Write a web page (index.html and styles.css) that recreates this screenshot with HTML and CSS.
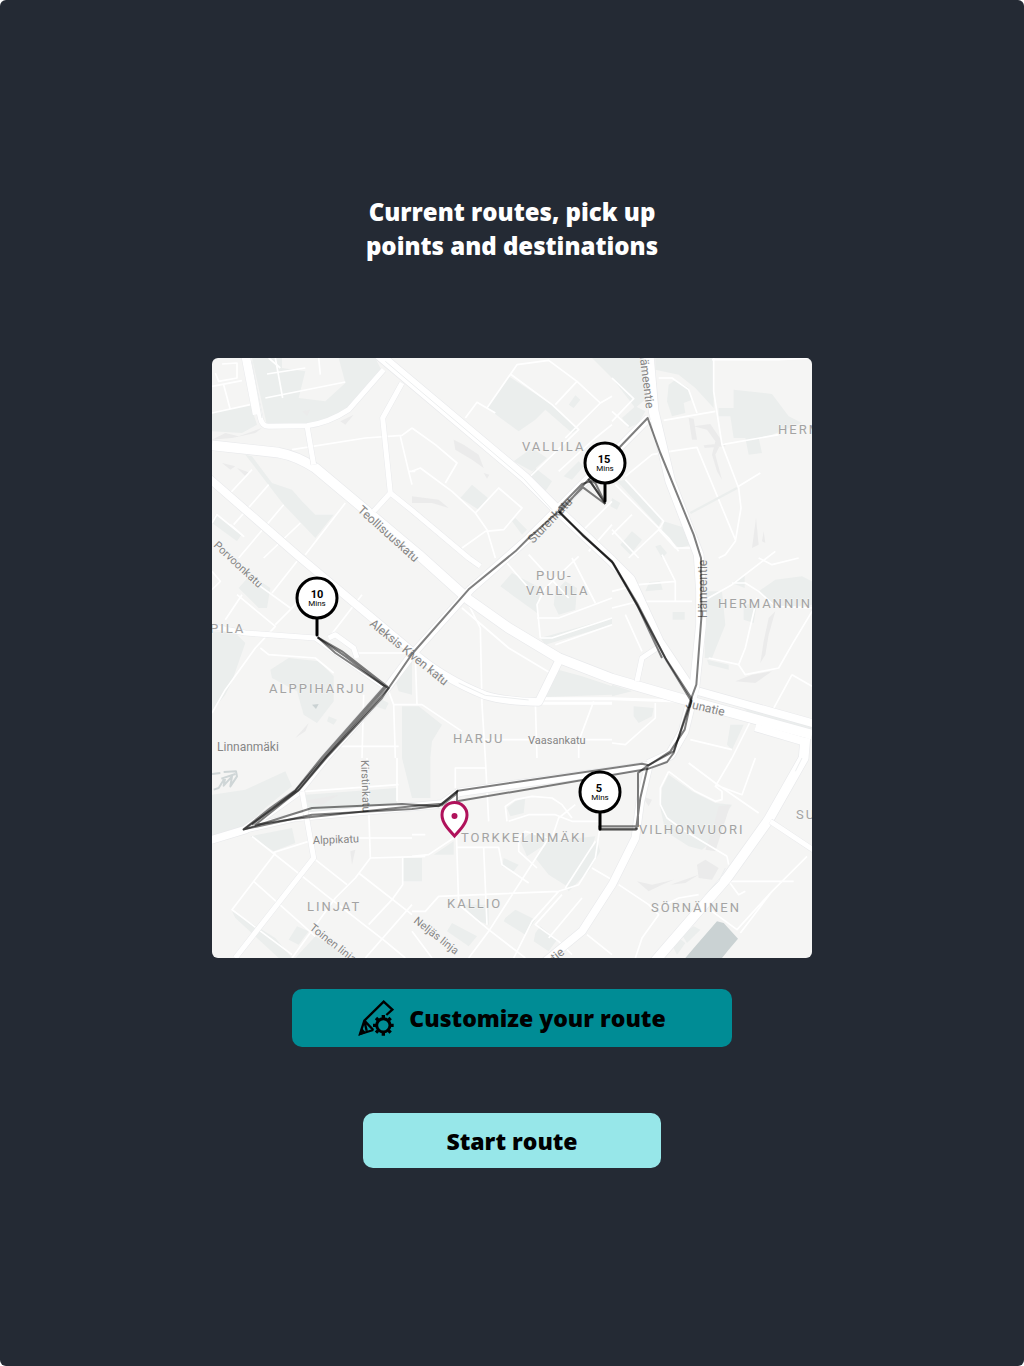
FILE: index.html
```html
<!DOCTYPE html>
<html lang="en">
<head>
<meta charset="utf-8">
<meta name="viewport" content="width=device-width, initial-scale=1">
<title>Current routes</title>
<link rel="stylesheet" href="styles.css">
</head>
<body>
<main class="screen">
  <h1 class="title">Current routes, pick up points and destinations</h1>

  <svg class="map" viewBox="0 0 600 600" role="img" aria-label="Map of current routes">
    <!-- Base map, drawn on a grid three times finer than the labels -->
    <svg width="600" height="600" viewBox="0 0 1800 1800">
      <rect class="land" width="1800" height="1800"/>
      <g class="park">
        <path d="M0 165L115 140L135 200L90 225L0 220ZM120 0L210 0V30L280 40L260 120L340 130L400 75L380 0H490L510 40L410 150Q350 200 285 203H165Z"/>
        <path d="M100 290L120 295L180 375L240 395L270 430L310 470L365 470L310 540L215 440Z"/>
        <path d="M10 470L88 530L75 550L0 495Z"/>
        <path d="M890 55L1020 140L1095 215L1080 225L1000 155L970 185L920 220L825 150ZM905 310L960 270L1005 300L960 340ZM780 380L828 420L800 455L745 420ZM950 360L970 330L1020 370L1000 400ZM1055 355L1100 310L1115 325L1080 365ZM1140 0H1310L1305 120L1270 150L1200 60ZM900 490L910 480L945 515L930 530ZM1070 140L1090 112L1105 125L1085 150Z"/>
        <path d="M1330 0H1505V150L1450 90L1400 50L1330 35ZM1370 80L1390 65L1430 90L1440 125L1415 135L1420 165L1380 175L1365 130ZM1230 180L1270 145L1300 160L1280 195L1250 210ZM1565 95L1680 108L1730 175L1770 195L1680 230L1640 240L1650 285L1610 290L1600 240L1565 240L1555 175L1520 175V150L1565 150Z"/>
        <path d="M1215 370L1240 365L1350 485L1340 505ZM1355 490L1420 510L1440 560L1400 570L1350 520ZM1225 560L1260 520L1290 545L1255 590ZM1330 565L1345 560L1365 585L1350 600ZM1200 420L1225 435L1215 455L1195 445Z"/>
        <path d="M80 690L115 650L175 690L165 750L140 750ZM0 820L70 825L100 855L60 970L40 1010L0 1060Z"/>
        <path d="M230 900L320 910L365 955V1030L315 1095L275 1070L255 1000L180 960L175 935ZM350 1075L375 1085L365 1100L345 1090Z"/>
        <path d="M560 930L600 890V1010L560 1000L545 950ZM500 1020L530 1035L520 1055L490 1045ZM570 1045H620L690 1100L660 1150L655 1200H570ZM570 1200H655V1320H600Z"/>
        <path d="M865 685L900 645L985 690L975 765ZM1030 700L1060 670L1095 690L1090 755L1040 770L1025 740ZM985 840L1200 780V800L1000 860ZM1020 930L1110 955L1200 985V1010L985 1018Z"/>
        <path d="M1300 700L1312 672L1345 670L1352 695ZM1480 700L1530 700L1540 800L1500 900H1478ZM1382 762H1418V785H1382ZM1560 675L1598 650V690ZM1640 700L1690 665L1770 655L1800 670V740L1690 750L1660 720ZM1595 740L1635 735L1625 795L1595 785Z"/>
        <path d="M1265 1045L1325 1050L1320 1075L1280 1095L1265 1075ZM1555 1100L1595 1100L1560 1175L1545 1160ZM1580 1040L1800 1105V1125L1640 1085ZM1485 905L1550 920V935L1490 920ZM1200 980L1260 1000L1200 1015Z"/>
        <path d="M0 1310L100 1295L220 1240L240 1285L160 1350L95 1410L0 1435ZM280 1310L555 1290V1335L290 1365ZM115 1435L240 1410L250 1455L185 1480ZM60 1660L190 1740L240 1800H200L70 1680ZM255 1705L290 1720L260 1760L230 1745ZM310 1735L420 1800H250ZM570 1500H630V1570H570Z"/>
        <path d="M665 1490L725 1450V1490ZM910 1330L940 1320L935 1365L895 1375L885 1350ZM925 1450L955 1425L1030 1440L945 1495ZM970 1500L1010 1450L1150 1435L1130 1500L1065 1585L1010 1550ZM1155 1450L1165 1480L1130 1540L1070 1600L1060 1585ZM875 1500L920 1520L905 1540L870 1525ZM750 1640H830V1700L800 1690ZM880 1680L910 1655L970 1685L940 1730L875 1690ZM720 1695L795 1735L770 1765L705 1720ZM970 1725L985 1705L1035 1745L1010 1780L965 1750Z"/>
        <path d="M1350 1290L1370 1250L1440 1300L1510 1335L1560 1340L1520 1400L1500 1450L1470 1475L1430 1465L1360 1420L1345 1350ZM1410 1730L1445 1705L1465 1715L1425 1755ZM1380 1760L1400 1740L1420 1755L1395 1790Z"/>
      </g>
      <g class="relief">
        <path d="M1430 180L1445 182L1455 245H1440ZM1445 205L1495 198L1530 250L1510 290L1530 365L1515 340L1500 290L1510 250L1485 215ZM1475 262L1540 255V265L1478 270Z"/>
        <path d="M0 245L40 225L80 235L150 210L130 225L60 240ZM30 315L70 325L55 335ZM75 330L115 345L100 355ZM385 190L425 170L400 200ZM270 160L295 155L285 175Z"/>
        <path d="M725 245L755 260L800 290L815 330L780 305L730 275ZM815 345L832 350L825 362ZM600 415L680 425L710 450L660 435H600Z"/>
        <path d="M1670 780L1690 760L1670 830L1660 890L1645 915L1655 850ZM1570 970L1620 950L1680 940L1630 975ZM1275 1570L1320 1580L1385 1565L1350 1580L1310 1600ZM1375 1580L1460 1550L1420 1575ZM1290 1315L1320 1325L1310 1345ZM1520 1345L1555 1340L1510 1480L1480 1475L1500 1420ZM1455 1520L1480 1505L1520 1530L1500 1565L1460 1560Z"/>
        <path d="M250 1140L290 1095L280 1120ZM415 1480L430 1475L420 1520ZM1620 570L1632 480L1640 560ZM1650 550L1655 520L1660 555ZM270 1330L380 1310L330 1340Z"/>
      </g>
      <g class="water">
        <path d="M1420 1800L1450 1765L1515 1690L1535 1695L1578 1742L1550 1775L1530 1800Z"/>
        <path d="M300 1040L320 1038L312 1053Z"/>
      </g>
      <path class="rides" d="M0 1248L25 1245M35 1242L72 1240L75 1255L55 1285L60 1255L35 1283L40 1258L20 1290L5 1295M28 1262L70 1248"/>

      <g class="street">
        <path d="M0 165L115 140M165 48L280 30M190 0L212 120M160 120L400 72M320 0L325 50M10 45L20 70L75 60V15L30 18M0 85L90 68M35 80L55 155"/>
        <path d="M240 275L460 240L570 232L600 210M565 235L590 340L600 380M590 340H610M120 335L55 405M170 380L65 500M215 440L80 600M265 495L155 600M400 435L280 590M0 495L15 470L95 535L55 500"/>
        <path d="M600 210L670 260L735 315L700 375M600 340L625 330L720 400L790 465L825 515L850 600M790 465L860 390L930 450L875 515L820 520L750 570"/>
        <path d="M760 180L795 133L850 165M825 150L915 20L1010 7L1095 70L1030 140M895 48L1020 140L1100 215L950 360M1095 70L1165 135L1200 115M1165 135L1060 240M1200 200L1150 240L1040 340"/>
        <path d="M1095 380L1000 480M1200 430L1100 530M1200 500L1130 580M1200 60L1265 122L1200 190M1200 160L1250 205M1340 60H1380L1430 95L1455 165M1355 187L1510 160M1505 0L1505 100L1530 260L1580 390L1587 450L1570 550L1540 590L1520 600M1530 260L1700 230M1580 385L1645 345M1375 280L1455 268L1570 545M1500 5L1700 5L1800 0"/>
        <path d="M1240 355L1320 290L1375 280M1240 365L1355 490L1340 515L1390 570L1440 570M1210 380L1370 540L1400 580M1200 530L1260 470M1250 600L1340 515M1200 515L1280 600"/>
        <path class="glint" d="M1435 465L1575 390"/>
        <path d="M75 710L190 805L130 870L40 995L0 1065M40 785L90 710M190 800L300 690M110 660L235 750M0 640L25 670L0 695M145 870L170 890L310 900L365 945M180 705L255 610M350 840L450 710M430 885H580M455 1010L450 1200M380 1165H560M545 1040L550 1200M530 1000L545 1040H630L750 1120M610 900L615 1040"/>
        <path d="M205 30L170 0M805 810L810 1040L820 1200M750 750L890 870L1015 945M770 740L805 810M985 840L975 740L1000 690L1100 595M975 780H1040L1200 720M885 615L950 690M950 590L1070 720M1080 600L1150 735M985 840L1020 840L1200 780M1030 860L1200 800"/>
        <path class="wide" d="M980 1022H1200L1420 1030M980 1036H1200"/>
        <path d="M970 1030L975 1200M820 1145H1200M1145 1030L1100 1150V1200M1200 750L1280 730H1440M1390 730V670L1280 680L1200 700M1240 770L1290 880M1350 590L1390 670M1480 725L1560 680L1690 580M1560 675H1600L1640 700L1690 745L1800 750M1640 600L1680 620L1760 600M1490 900L1580 920L1600 870L1635 720M1580 920L1600 950L1700 930L1740 860L1800 760M1740 950L1680 1060M1740 950L1800 985M1435 1145L1560 1175M1620 1080L1560 1200M1200 1155L1240 1160L1330 1080V1035"/>
        <path d="M280 1300L560 1280M555 1200V1330M465 1200L475 1500L430 1560L370 1620L240 1800M120 1435L340 1610L520 1750L580 1800M180 1485L290 1450M190 1485L60 1655L240 1790M125 1570L310 1735M310 1505L405 1580M440 1545L600 1670M475 1500L640 1495M440 1440H600M572 1500V1580L540 1625L470 1700M600 1640L460 1800M640 1430L600 1430"/>
        <path d="M730 1290V1230H820M820 1200L830 1390M730 1330L740 1640M600 1495L650 1490L725 1440M735 1468H860L870 1520L950 1575M815 1470L825 1700M600 1660H640L680 1615L1040 1600L1100 1580L1150 1500L1165 1400M885 1390L880 1345L910 1325L960 1315L1020 1320L1050 1340L1080 1380M890 1390L950 1370L1030 1370L1080 1390H1160M920 1440L940 1420L1010 1440L830 1720L770 1800M920 1440V1480L975 1530M1020 1440L1040 1380L1090 1340M1040 1600L960 1690L905 1800M1050 1610L970 1700L1040 1750L1080 1790M1110 1620L1010 1740M740 1640L830 1715L940 1800M1140 1530L1200 1565M1150 1450L1060 1590M600 1720L660 1800M1125 1730L1200 1790"/>
        <path d="M1370 1240L1345 1290L1345 1340L1365 1380L1420 1420L1545 1495M1370 1240L1450 1300L1510 1330L1530 1325V1300L1510 1285L1560 1200M1510 1280L1590 1310L1630 1200M1430 1215L1510 1275L1640 1365M1220 1580L1310 1640L1340 1670L1290 1740L1270 1800M1340 1650L1400 1620L1460 1610M1545 1570H1745M1550 1570L1580 1610L1600 1600M1785 1495L1680 1600L1585 1725M1680 1600L1575 1715L1500 1660M1545 1495L1550 1520"/>
      </g>

      <g class="road-edge">
        <path id="r1" d="M0 262L200 284Q255 294 310 330L620 590L770 725L890 810L1040 900L1200 962L1400 1020L1800 1130"/>
        <path id="r2" d="M500 -10L940 360L1030 450L1200 610L1255 665L1340 850L1440 1000"/>
        <path id="r4" d="M1310 -10L1325 160L1375 370L1460 590L1467 700V800L1447 990L1415 1120L1375 1190L1310 1220"/>
        <path id="r7" d="M1780 1140L1775 1200L1670 1385L1545 1560L1320 1820"/>
      </g>
      <g class="road-edge mid">
        <path id="r3" d="M-10 360L260 595L600 880Q690 960 820 1012Q880 1030 980 1032L1040 910"/>
        <path id="r5" d="M1310 180L1120 370L950 540L775 695L600 890L525 990L340 1200L260 1300L100 1415L-10 1448"/>
        <path id="r6" d="M100 1412L250 1378L690 1338L740 1303L1310 1223L1285 1330L1270 1440L1200 1580L1110 1720L1000 1810"/>
        <path id="r8" d="M1460 1000L1810 1098M1630 1108L1790 1155"/>
      </g>
      <g class="road">
        <use href="#r1"/><use href="#r2"/><use href="#r4"/><use href="#r7"/>
      </g>
      <g class="road mid">
        <use href="#r3"/><use href="#r5"/><use href="#r6"/><use href="#r8"/>
      </g>
      <g class="lane-edge">
        <path id="l1" d="M105 -10L145 180Q150 205 170 205L285 203Q350 195 410 155L515 35M95 -10L130 170"/>
        <path id="l2" d="M285 203L305 320M570 75L512 180L535 405L485 460M535 405L600 457L770 600L805 625"/>
        <path id="l3" d="M270 1300L305 1500L70 1800M1675 1390L1810 1480"/>
        <path id="l4" d="M0 805L100 825L310 840L515 985M350 840L370 830L425 870L435 900M1275 970L1290 900L1335 870"/>
      </g>
      <g class="lane">
        <use href="#l1"/><use href="#l2"/><use href="#l3"/><use href="#l4"/>
      </g>
      <path class="median" d="M520 10L935 362L1020 455M740 975L820 1012L950 1026M120 10L150 180M1540 1530L1520 1570L1480 1610M1770 1200L1750 1240"/>
    </svg>

    <g class="label area">
      <text x="310" y="93">VALLILA</text>
      <text x="566" y="76">HERMANNI</text>
      <text x="324" y="222">PUU-</text>
      <text x="314" y="237">VALLILA</text>
      <text x="506" y="250">HERMANNINRANTA</text>
      <text x="-2" y="275">PILA</text>
      <text x="57" y="335">ALPPIHARJU</text>
      <text x="241" y="385">HARJU</text>
      <text x="249" y="484">TORKKELINMÄKI</text>
      <text x="427" y="476">VILHONVUORI</text>
      <text x="584" y="461">SUVILAHTI</text>
      <text x="95" y="553">LINJAT</text>
      <text x="235" y="550">KALLIO</text>
      <text x="439" y="554">SÖRNÄINEN</text>
    </g>
    <g class="label">
      <text x="5" y="393">Linnanmäki</text>
      <text class="small" x="316" y="386">Vaasankatu</text>
      <text class="small" transform="translate(101 486) rotate(-2)">Alppikatu</text>
      <text class="small" transform="translate(149 402) rotate(88)">Kirstinkatu</text>
      <text transform="translate(145 153) rotate(42)">Teollisuuskatu</text>
      <text class="small" transform="translate(1 188) rotate(43)">Porvoonkatu</text>
      <text transform="translate(157 267) rotate(39)">Aleksis Kiven katu</text>
      <text transform="translate(321 186) rotate(-46)">Sturenkatu</text>
      <text transform="translate(427 -7) rotate(83)">Hämeentie</text>
      <text transform="translate(495 260) rotate(-90)">Hämeentie</text>
      <text transform="translate(473 349) rotate(13)">Junatie</text>
      <text class="small" transform="translate(97 571) rotate(38)">Toinen linja</text>
      <text class="small" transform="translate(201 564) rotate(38)">Neljäs linja</text>
      <text transform="translate(343 604) rotate(-40)">tie</text>
    </g>

    <svg width="600" height="600" viewBox="0 0 1800 1800">
      <g class="route">
        <path d="M1180 438L1113 388L1040 460L950 540L910 580L772 692L600 888L530 990L340 1200L258 1298L130 1400L250 1382L600 1345L690 1337L738 1298L1290 1217L1310 1222L1375 1180L1418 1115L1440 1015L1453 980L1468 780L1467 600L1445 530L1345 285L1307 180L1120 375L1042 465"/>
        <path d="M317 838L370 885L515 982L530 990L510 1020L345 1197L262 1295L95 1415L300 1350L570 1338L680 1345L735 1300L735 1330L1310 1232L1365 1212L1385 1185L1418 1080L1438 1020L1360 900L1275 735L1200 610L1110 530L1040 460"/>
        <path d="M317 838L400 895L518 985L330 1198L250 1297L175 1350L95 1414L300 1370L600 1353L690 1342L730 1310L738 1296M1042 460L1113 533L1204 616L1280 750L1365 910L1438 1030L1385 1180L1308 1222L1278 1245V1405H1162L1163 1415H1272L1285 1320L1308 1222M1180 438L1135 370L1110 378L1040 450"/>
        <path d="M317 838L390 880L525 985L340 1195L250 1298L120 1400M1178 432L1130 365L1150 375ZM1040 462L1200 612L1275 740L1350 900M1163 1412H1278"/>
      </g>
    </svg>

    <g class="stop">
      <path d="M105 260V277M393 125V143M388 454V471"/>
      <circle cx="105" cy="240" r="20"/>
      <circle cx="393" cy="105" r="20"/>
      <circle cx="388" cy="434" r="20"/>
    </g>
    <g class="stop-text">
      <text class="count" x="105" y="240">10</text><text class="unit" x="105" y="248">Mins</text>
      <text class="count" x="392" y="105">15</text><text class="unit" x="393" y="113">Mins</text>
      <text class="count" x="387" y="434">5</text><text class="unit" x="388" y="442">Mins</text>
    </g>
    <g class="destination">
      <path d="M242.500 478C236 471 230 464.500 230 457A12.500 12.500 0 0 1 255 457C255 464.500 249 471 242.500 478Z"/>
      <circle cx="242.500" cy="458" r="3"/>
    </g>
  </svg>

  <button class="button customize" type="button">
    <svg class="icon" viewBox="0 0 108 108" aria-hidden="true">
      <path class="line" d="M85 45L103 29L77 5L19 62L6 102L46 90M19 62L46 90M19 62L26 92"/>
      <path class="nib" d="M2 107L11 83L24 98Z"/>
      <circle class="gear" cx="76" cy="76" r="20"/>
      <path class="teeth" d="M76 54V45M76 98V107M54 76H45M98 76H107M60 60L54 54M92 92L98 98M60 92L54 98M92 60L98 54"/>
    </svg>
    <span>Customize your route</span>
  </button>
  <button class="button start" type="button">Start route</button>
</main>
</body>
</html>
```
FILE: styles.css
```css
* {
  box-sizing: border-box;
}

body {
  margin: 0;
  background: #fff;
  font-family: "Open Sans", "Noto Sans", sans-serif;
}

.screen {
  display: flex;
  flex-direction: column;
  align-items: center;
  min-height: 100vh;
  padding: 195px 24px 64px;
  border-radius: 6px;
  background: #242a34;
}

.title {
  max-width: 320px;
  margin: 0 0 95px;
  color: #fff;
  font-size: 24px;
  font-weight: 800;
  line-height: 34px;
  text-align: center;
}

.map {
  display: block;
  width: 100%;
  max-width: 600px;
  aspect-ratio: 1;
  margin-bottom: 31px;
  border-radius: 6px;
  overflow: hidden;
}

.land { fill: #f5f5f4; }
.park { fill: #ebeeed; }
.relief { fill: #ebebeb; }
.water { fill: #cad2d3; }

.rides,
.street,
.road-edge,
.road,
.lane-edge,
.lane,
.median,
.route {
  fill: none;
  stroke-linejoin: round;
}

.rides { stroke: #cfd6d7; stroke-width: 6; }
.street { stroke: #fff; stroke-width: 5; }
.wide { stroke-width: 9; }
.glint { stroke: #ebeeed; stroke-width: 7; }
.road-edge { stroke: #e9eaec; stroke-width: 33; }
.road { stroke: #fff; stroke-width: 29; }
.road-edge.mid { stroke-width: 27; }
.road.mid { stroke-width: 23; }
.lane-edge { stroke: #e9eaec; stroke-width: 18; }
.lane { stroke: #fff; stroke-width: 15; }
.median { stroke: #eceeef; stroke-width: 3; }

.route path {
  stroke: #000;
  stroke-opacity: 0.5;
  stroke-width: 6;
}

.label {
  fill: #858585;
  font-family: Roboto, "Liberation Sans", sans-serif;
  font-size: 12px;
  paint-order: stroke;
  stroke: #f7f7f6;
  stroke-width: 1px;
}

.label .small { font-size: 11px; }

.label.area {
  fill: #a3a3a3;
  font-size: 13px;
  letter-spacing: 2px;
}

.stop {
  fill: #fff;
  stroke: #000;
  stroke-width: 3;
  stroke-linecap: round;
}

.stop-text {
  font-family: Roboto, sans-serif;
  text-anchor: middle;
}

.count { font-size: 11px; font-weight: 700; }
.unit { font-size: 8px; }

.destination path {
  fill: #fff;
  stroke: #b0125b;
  stroke-width: 3;
}

.destination circle { fill: #b0125b; }

.button {
  display: flex;
  align-items: center;
  justify-content: center;
  gap: 15px;
  max-width: 100%;
  padding: 0;
  border: 0;
  border-radius: 10px;
  color: #000;
  font: 800 23px/34px "Open Sans", "Noto Sans", sans-serif;
  cursor: pointer;
}

.customize {
  width: 440px;
  min-height: 58px;
  margin-bottom: 66px;
  background: #008c95;
}

.start {
  width: 298px;
  min-height: 55px;
  background: #97e7e9;
}

.icon {
  width: 36px;
  height: 36px;
  fill: none;
  stroke: #000;
}

.line { stroke-width: 7; }
.nib { fill: #000; stroke: none; }
.gear { stroke-width: 9; }
.teeth { stroke-width: 10; }
```
